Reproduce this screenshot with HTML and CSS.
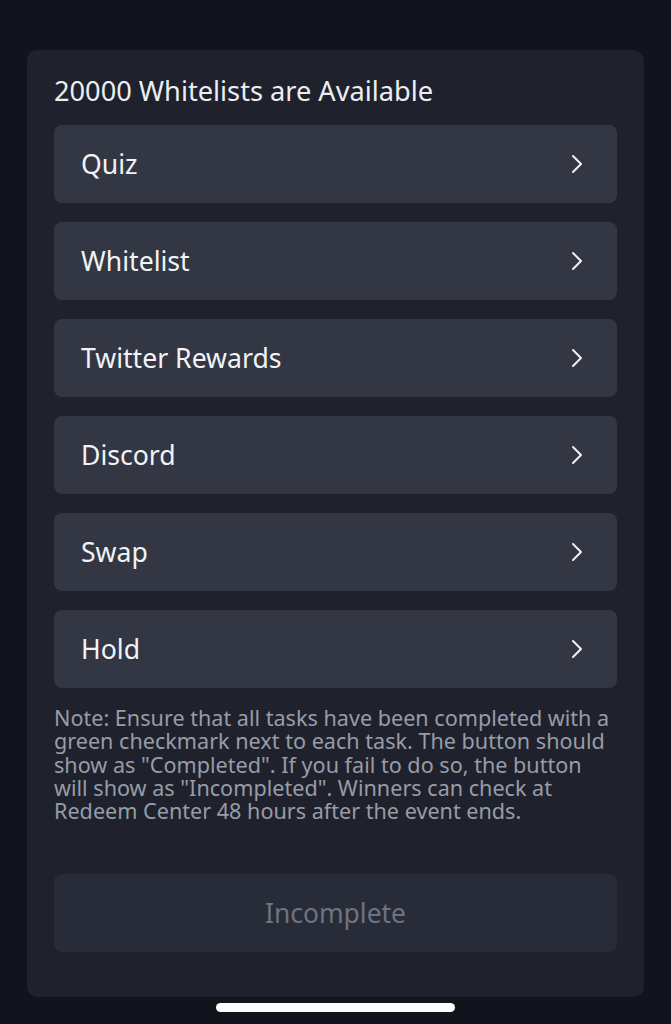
FILE: index.html
```html
<!DOCTYPE html>
<html lang="en">

<head>
    <meta charset="UTF-8" />
    <meta name="viewport" content="width=device-width, initial-scale=1.0" />
    <title>Whitelist Tasks</title>
    <link rel="stylesheet" href="styles.css">
</head>

<body>

    <section class="task-card">
        <h2 class="task-title">20000 Whitelists are Available</h2>

        <div class="task-list">
            <a class="task-row" href="#">
                <span>Quiz</span>
                <svg class="chevron" viewBox="0 0 12 20"><path d="M2 2l8 8-8 8" /></svg>
            </a>
            <a class="task-row" href="#">
                <span>Whitelist</span>
                <svg class="chevron" viewBox="0 0 12 20"><path d="M2 2l8 8-8 8" /></svg>
            </a>
            <a class="task-row" href="#">
                <span>Twitter Rewards</span>
                <svg class="chevron" viewBox="0 0 12 20"><path d="M2 2l8 8-8 8" /></svg>
            </a>
            <a class="task-row" href="#">
                <span>Discord</span>
                <svg class="chevron" viewBox="0 0 12 20"><path d="M2 2l8 8-8 8" /></svg>
            </a>
            <a class="task-row" href="#">
                <span>Swap</span>
                <svg class="chevron" viewBox="0 0 12 20"><path d="M2 2l8 8-8 8" /></svg>
            </a>
            <a class="task-row" href="#">
                <span>Hold</span>
                <svg class="chevron" viewBox="0 0 12 20"><path d="M2 2l8 8-8 8" /></svg>
            </a>
        </div>

        <p class="task-note">Note: Ensure that all tasks have been completed with a green checkmark next to each task. The button should show as "Completed". If you fail to do so, the button will show as "Incompleted". Winners can check at Redeem Center 48 hours after the event ends.</p>

        <button class="btn-status" disabled>Incomplete</button>
    </section>

    <div class="home-bar"></div>

</body>

</html>
```

FILE: styles.css
```css
* {
    margin: 0;
    padding: 0;
    box-sizing: border-box;
}

body {
    font-family: "Noto Sans", "Open Sans", sans-serif;
    background: #11141d;
    min-height: 100vh;
    padding: 50px 27px 0;
}

.task-card {
    background: #1f222d;
    border-radius: 10px;
    padding: 24px 27px 44px;
    height: 947px;
}

.task-title {
    color: #eceef2;
    font-size: 27.2px;
    font-weight: 400;
    line-height: 34px;
    margin-bottom: 17px;
}

.task-list {
    display: flex;
    flex-direction: column;
    gap: 19px;
}

.task-row {
    height: 78px;
    background: #333744;
    border-radius: 8px;
    display: flex;
    align-items: center;
    justify-content: space-between;
    padding: 0 34px 0 27px;
    color: #f2f3f6;
    font-size: 26.6px;
    text-decoration: none;
}

.chevron {
    width: 12px;
    height: 20px;
    fill: none;
    stroke: #f2f3f6;
    stroke-width: 2;
    stroke-linecap: round;
    stroke-linejoin: round;
}

.task-note {
    color: #989ca7;
    font-size: 21.6px;
    line-height: 23.3px;
    margin-top: 18px;
}

.btn-status {
    width: 100%;
    height: 78px;
    margin-top: 52px;
    border: none;
    border-radius: 8px;
    background: #282c39;
    color: #6f7380;
    font-family: inherit;
    font-size: 26.4px;
}

.home-bar {
    width: 239px;
    height: 9px;
    margin: 6px auto 0;
    background: #ffffff;
    border-radius: 5px;
}
```
